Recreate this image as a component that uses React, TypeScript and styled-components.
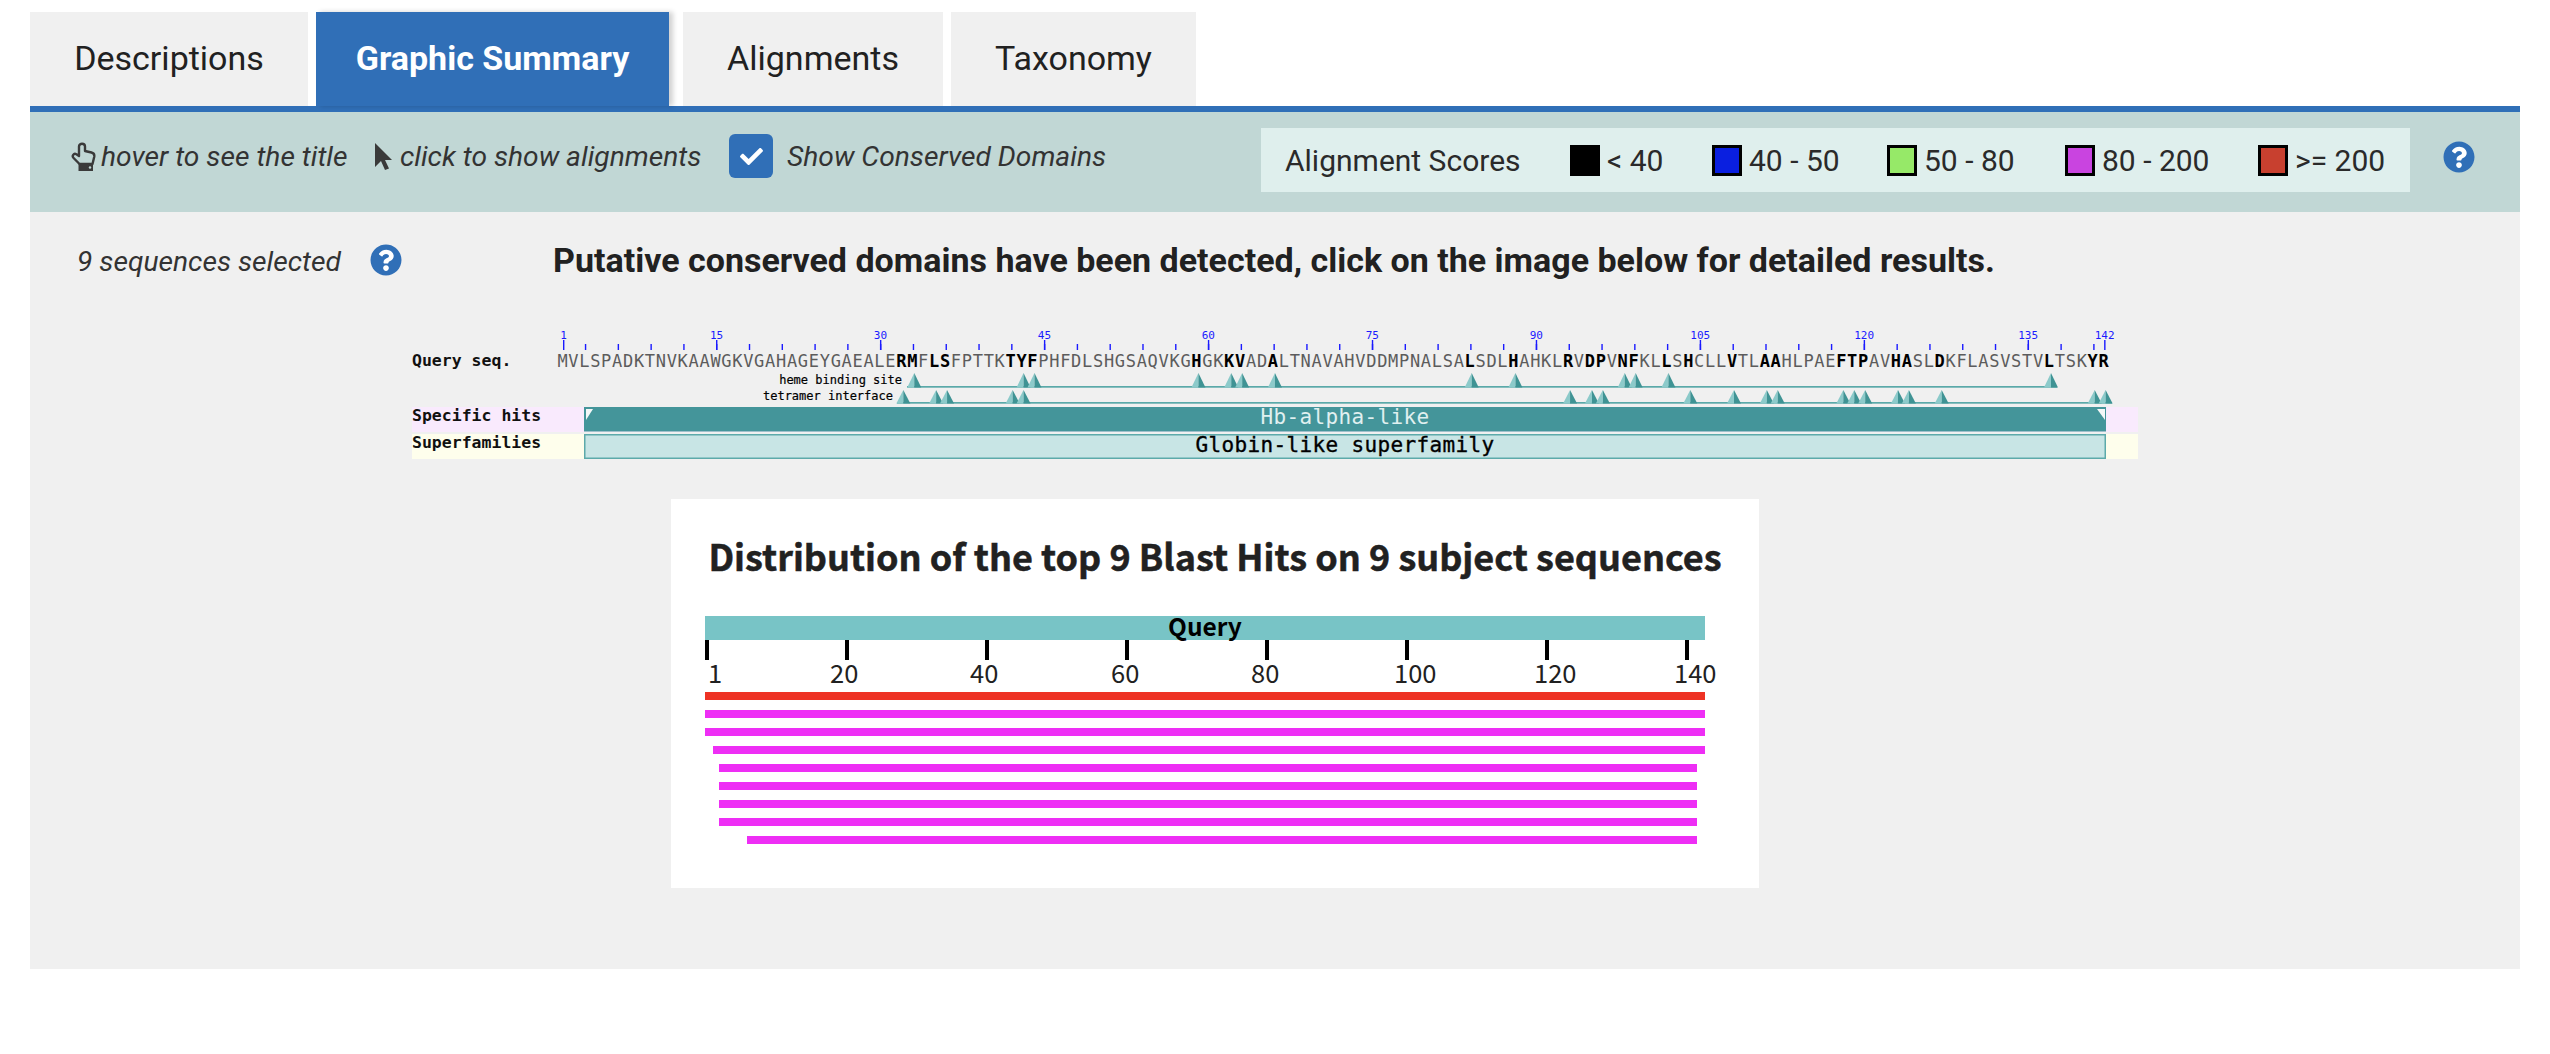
import styled, { createGlobalStyle } from "styled-components";
import { FaCheck, FaQuestionCircle } from "react-icons/fa";

const GlobalStyle = createGlobalStyle`
  html, body {
    margin: 0;
    padding: 0;
    background: #fff;
    font-family: Roboto, "Liberation Sans", sans-serif;
    color: #212121;
  }
`;

const Page = styled.div`
  padding: 12px 30px 0;
  height: 1042px;
`;

const TabBar = styled.div`
  display: flex;
  height: 94px;
  border-bottom: 6px solid #306fb7;
`;

const Tab = styled.div<{ $active?: boolean; $w: number; $mr: number }>`
  width: ${(p) => p.$w}px;
  margin-right: ${(p) => p.$mr}px;
  padding-top: 31px;
  box-sizing: border-box;
  text-align: center;
  font-size: 34px;
  line-height: 30px;
  font-weight: ${(p) => (p.$active ? 700 : 400)};
  background: ${(p) => (p.$active ? "#306fb7" : "#f0f0f0")};
  color: ${(p) => (p.$active ? "#fff" : "#212121")};
  box-shadow: ${(p) => (p.$active ? "4px 0 5px rgba(0,0,0,0.18)" : "none")};
`;

const Toolbar = styled.div`
  display: flex;
  align-items: flex-start;
  height: 100px;
  padding: 0 45px 0 41px;
  background: #c1d7d5;
`;

const Hint = styled.div<{ $w?: number; $gap: number }>`
  display: flex;
  align-items: center;
  gap: ${(p) => p.$gap}px;
  width: ${(p) => (p.$w ? `${p.$w}px` : "auto")};
  height: 44px;
  margin-top: 22px;
  font-size: 28.2px;
  font-style: italic;
  font-weight: 400;
  color: #333;
  white-space: nowrap;
  svg {
    flex: none;
    color: #3a3a3a;
  }
`;

const CheckBox = styled.div`
  display: flex;
  align-items: center;
  justify-content: center;
  width: 44px;
  height: 44px;
  margin: 22px 14px 0 0;
  border-radius: 6px;
  background: #306fb7;
  color: #fff;
`;

const Legend = styled.div`
  display: flex;
  align-items: center;
  height: 64px;
  width: 1149px;
  margin: 16px 0 0 auto;
  padding-left: 24px;
  box-sizing: border-box;
  background: #dfefed;
  font-size: 30px;
  font-weight: 400;
  color: #2a2a2a;
`;

const LegendTitle = styled.span`
  width: 285px;
`;

const LegendItem = styled.div<{ $w: number }>`
  display: flex;
  align-items: center;
  gap: 7px;
  width: ${(p) => p.$w}px;
`;

const Swatch = styled.span<{ $c: string }>`
  width: 30px;
  height: 31px;
  box-sizing: border-box;
  border: 3px solid #000;
  background: ${(p) => p.$c};
`;

const HelpIcon = styled.span<{ $ml: number; $mt?: number }>`
  display: inline-flex;
  margin-left: ${(p) => p.$ml}px;
  margin-top: ${(p) => p.$mt ?? 0}px;
  color: #306fb7;
  background: radial-gradient(circle, #fff 55%, transparent 57%);
  border-radius: 50%;
`;

const Panel = styled.div`
  height: 757px;
  background: #f0f0f0;
`;

const SummaryRow = styled.div`
  display: flex;
  align-items: center;
  height: 95px;
  padding: 0 0 0 47px;
`;

const Selected = styled.span`
  width: 293px;
  font-size: 28.2px;
  font-style: italic;
  font-weight: 400;
  color: #333;
  padding-top: 4px;
`;

const Notice = styled.h2`
  margin: 0 0 0 151px;
  font-size: 34px;
  font-weight: 700;
  color: #212121;
  white-space: nowrap;
`;

const DomainGraphic = styled.svg`
  display: block;
  margin: 18px auto 0;
  text {
    font-family: "DejaVu Sans Mono", "Liberation Mono", monospace;
  }
`;

const ChartCard = styled.div`
  width: 1088px;
  height: 389px;
  margin: 34px 0 0 641px;
  background: #fff;
  box-sizing: border-box;
  padding-top: 32px;
`;

const ChartTitle = styled.h3`
  margin: 0;
  text-align: center;
  font-family: "Noto Sans CJK JP", "Noto Sans", sans-serif;
  font-size: 36px;
  line-height: 48px;
  font-weight: 700;
  color: #212121;
  -webkit-text-stroke: 0.5px #212121;
`;

const HitChart = styled.svg`
  display: block;
  margin-top: 25px;
  text {
    font-family: "Noto Sans CJK JP", "Noto Sans", sans-serif;
  }
`;

const SEQ =
  "MVLSPADKTNVKAAWGKVGAHAGEYGAEALERMFLSFPTTKTYFPHFDLSHGSAQVKGHGKKVADALTNAVAHVDDMPNALSALSDLHAHKLRVDPVNFKLLSHCLLVTLAAHLPAEFTPAVHASLDKFLASVSTVLTSKYR";
const HEME = [33, 43, 44, 59, 62, 63, 66, 84, 88, 98, 99, 102, 137];
const TETRAMER = [32, 35, 36, 42, 43, 93, 95, 96, 104, 108, 111, 112, 118, 119, 120, 123, 124, 127, 141, 142];
const BOLD = new Set([...HEME, ...TETRAMER]);

// graphic coordinates: origin at page x=400, y=325
const resX = (i: number) => 163.5 + 10.93 * (i - 1);

const tickList: number[] = [];
for (let i = 3; i <= 141; i += 3) tickList.push(i);
const labelled = [1, 15, 30, 45, 60, 75, 90, 105, 120, 135, 142];

function HandIcon() {
  return (
    <svg width={25} height={29} viewBox="0 0 25 29">
      <path
        d="M8 12V4.5C8 .8 14 .8 14 4.5V9L20.5 10.5C23 11.2 23.6 13 23.2 15L21.5 22H8.5L2.6 16C.6 14 2.6 10.8 5.4 12.2L8 14Z"
        fill="none"
        stroke="currentColor"
        strokeWidth={2.4}
        strokeLinejoin="round"
      />
      <path d="M7.5 22H22V29H7.5Z" fill="currentColor" />
      <circle cx={19} cy={25.5} r={1.2} fill="#c1d7d5" />
    </svg>
  );
}

function ArrowIcon() {
  return (
    <svg width={18} height={28} viewBox="0 0 18 28">
      <path d="M1 1L18 18H11L15 26.5L11 28L7 19L1 25Z" fill="currentColor" />
    </svg>
  );
}

function Site({ at, base, top }: { at: number; base: number; top: number }) {
  const x = resX(at) + 1;
  return (
    <g>
      <polygon points={`${x - 7},${base} ${x},${top} ${x},${base}`} fill="#8ccaca" />
      <polygon points={`${x},${base} ${x},${top} ${x + 7},${base}`} fill="#3f9394" />
    </g>
  );
}

function DomainView() {
  return (
    <DomainGraphic width={1750} height={140} viewBox="0 0 1750 140">
      {labelled.map((n) => (
        <g key={n}>
          <rect x={resX(n) - 0.5} y={15} width={1.4} height={10} fill="#1a1aff" />
          <text x={resX(n)} y={14} fontSize={11} fill="#1a1aff" textAnchor="middle">
            {n}
          </text>
        </g>
      ))}
      {tickList.map((n) => (
        <rect key={n} x={resX(n) - 0.5} y={19} width={1.4} height={6} fill="#1a1aff" />
      ))}
      <text x={12} y={41} fontSize={16.5} fontWeight={700} fill="#111">
        Query seq.
      </text>
      {SEQ.split("").map((c, i) => (
        <text
          key={i}
          x={resX(i + 1) - 1}
          y={41.5}
          fontSize={17}
          textAnchor="middle"
          fontWeight={BOLD.has(i + 1) ? 700 : 400}
          fill={BOLD.has(i + 1) ? "#000" : "#5c5c5c"}
        >
          {c}
        </text>
      ))}

      <text x={502} y={59} fontSize={12} fill="#000" stroke="#000" strokeWidth={0.2} textAnchor="end">
        heme binding site
      </text>
      <rect x={507} y={61} width={1150} height={1.7} fill="#5aa9a9" />
      {HEME.map((n) => (
        <Site key={n} at={n} base={62.5} top={48} />
      ))}
      <text x={493} y={75} fontSize={12} fill="#000" stroke="#000" strokeWidth={0.2} textAnchor="end">
        tetramer interface
      </text>
      <rect x={497} y={77} width={1215} height={1.7} fill="#5aa9a9" />
      {TETRAMER.map((n) => (
        <Site key={n} at={n} base={78.5} top={65} />
      ))}

      <rect x={12} y={82} width={1726} height={25} fill="#f9eafd" />
      <rect x={12} y={109} width={1726} height={25} fill="#fefeec" />
      <text x={12} y={96} fontSize={16.5} fontWeight={700} fill="#111">
        Specific hits
      </text>
      <text x={12} y={123} fontSize={16.5} fontWeight={700} fill="#111">
        Superfamilies
      </text>

      <rect x={184} y={82} width={1522} height={24.5} fill="#44959a" />
      <polygon points="186,84 193,84 186,95" fill="#f4f8f8" />
      <polygon points="1705,84 1697,84 1705,95" fill="#f4f8f8" />
      <text x={945} y={99} fontSize={21} letterSpacing={0.35} fill="#e0f0f0" textAnchor="middle">
        Hb-alpha-like
      </text>
      <rect x={184.75} y={109.75} width={1520.5} height={23.5} fill="#c8e5e5" stroke="#5daaaa" strokeWidth={1.5} />
      <text
        x={945}
        y={127}
        fontSize={21}
        letterSpacing={0.35}
        fill="#000"
        stroke="#000"
        strokeWidth={0.35}
        textAnchor="middle"
      >
        Globin-like superfamily
      </text>
    </DomainGraphic>
  );
}

const axis = [
  { label: "1", tick: 34, x: 37 },
  { label: "20", tick: 174, x: 159 },
  { label: "40", tick: 314, x: 299 },
  { label: "60", tick: 454, x: 440 },
  { label: "80", tick: 594, x: 580 },
  { label: "100", tick: 734, x: 723 },
  { label: "120", tick: 874, x: 863 },
  { label: "140", tick: 1014, x: 1003 },
];

const hits = [
  { x: 34, end: 1034, color: "#ee3224" },
  { x: 34, end: 1034, color: "#ee2ef5" },
  { x: 34, end: 1034, color: "#ee2ef5" },
  { x: 42, end: 1034, color: "#ee2ef5" },
  { x: 48, end: 1026, color: "#ee2ef5" },
  { x: 48, end: 1026, color: "#ee2ef5" },
  { x: 48, end: 1026, color: "#ee2ef5" },
  { x: 48, end: 1026, color: "#ee2ef5" },
  { x: 76, end: 1026, color: "#ee2ef5" },
];

function HitView() {
  return (
    <HitChart width={1088} height={252} viewBox="0 -12 1088 252">
      <rect x={34} y={0} width={1000} height={24} fill="#78c4c6" />
      <text x={534} y={20} fontSize={24.5} fontWeight={700} fill="#000" textAnchor="middle">
        Query
      </text>
      {axis.map((a) => (
        <g key={a.label}>
          <rect x={a.tick} y={24} width={4} height={20} fill="#000" />
          <text x={a.x} y={67} fontSize={25.5} fill="#212121">
            {a.label}
          </text>
        </g>
      ))}
      {hits.map((h, i) => (
        <rect key={i} x={h.x} y={76 + i * 18} width={h.end - h.x} height={8} fill={h.color} />
      ))}
    </HitChart>
  );
}

function App() {
  return (
    <Page>
      <GlobalStyle />
      <TabBar>
        <Tab $w={278} $mr={8}>Descriptions</Tab>
        <Tab $w={353} $mr={14} $active>Graphic Summary</Tab>
        <Tab $w={260} $mr={8}>Alignments</Tab>
        <Tab $w={245} $mr={0}>Taxonomy</Tab>
      </TabBar>
      <Toolbar>
        <Hint $w={303} $gap={5}>
          <HandIcon />
          hover to see the title
        </Hint>
        <Hint $w={355} $gap={8}>
          <ArrowIcon />
          click to show alignments
        </Hint>
        <CheckBox>
          <FaCheck size={23} />
        </CheckBox>
        <Hint $gap={0}>Show Conserved Domains</Hint>
        <Legend>
          <LegendTitle>Alignment Scores</LegendTitle>
          <LegendItem $w={142}><Swatch $c="#000" />&lt; 40</LegendItem>
          <LegendItem $w={175}><Swatch $c="#0a1fe0" />40 - 50</LegendItem>
          <LegendItem $w={178}><Swatch $c="#96e968" />50 - 80</LegendItem>
          <LegendItem $w={193}><Swatch $c="#c944e0" />80 - 200</LegendItem>
          <LegendItem $w={130}><Swatch $c="#c8402f" />&gt;= 200</LegendItem>
        </Legend>
        <HelpIcon $ml={33} $mt={29}>
          <FaQuestionCircle size={32} />
        </HelpIcon>
      </Toolbar>
      <Panel>
        <SummaryRow>
          <Selected>9 sequences selected</Selected>
          <HelpIcon $ml={0}>
            <FaQuestionCircle size={32} />
          </HelpIcon>
          <Notice>Putative conserved domains have been detected, click on the image below for detailed results.</Notice>
        </SummaryRow>
        <DomainView />
        <ChartCard>
          <ChartTitle>Distribution of the top 9 Blast Hits on 9 subject sequences</ChartTitle>
          <HitView />
        </ChartCard>
      </Panel>
    </Page>
  );
}

export default App;
